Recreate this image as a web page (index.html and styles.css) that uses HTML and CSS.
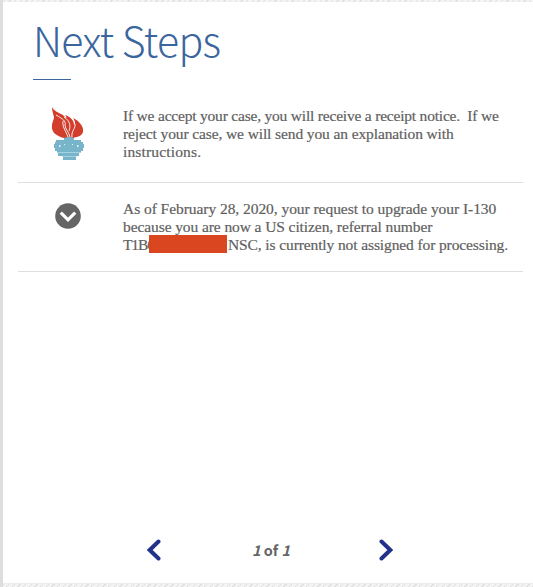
FILE: index.html
```html
<!DOCTYPE html>
<html lang="en">
<head>
    <meta charset="UTF-8">
    <meta name="viewport" content="width=device-width, initial-scale=1.0">
    <title>Next Steps</title>
    <link rel="stylesheet" href="styles.css">
</head>
<body>
    <main class="panel">
        <h1 class="title">Next Steps</h1>

        <div class="steps">
            <div class="step step-notice">
                <svg class="torch" viewBox="0 0 34 54" width="34" height="54">
                    <path fill="#d33d2c" d="M1 0C4 6 11 6 14 10C16 12 16 10 14 8C20 10 23 14 23 18C25 17 24 14 22 11C28 14 33 19 32 25C31 29 26 30 22 31H13C5 29 0 25 1 18C1 15 3 13 3 10C2 7 1 3 1 0Z"/>
                    <path fill="none" stroke="#fff" stroke-width="0.9" d="M5 8C12 12 15 14 14 18C14 22 18 25 19 30M13 10C19 14 20 19 18 24M12 14C11 20 15 24 17 30M24 17C25 21 20 24 21 30"/>
                    <path fill="#78b5cb" d="M13 31Q18 29 23 31V33H13ZM5 33H30V35H32V37H33V41H32V44H30V46H6V44H4V41H3V37H4V35H5ZM7 46H28V49H7ZM12 49H25V53H12Z"/>
                    <path fill="#b9dbe6" d="M6 45H30V45.7H6ZM11 49H26V49.7H11Z"/>
                    <path fill="#e2f2f6" d="M8 38H9.5V40H8ZM13 37H14V38H13ZM21 37H22V38H21ZM26 38H27.5V40H26Z"/>
                </svg>
                <p class="step-text">
                    <span class="line notice-1">If we accept your case, you will receive a receipt notice.&nbsp; If we</span>
                    <span class="line notice-2">reject your case, we will send you an explanation with</span>
                    <span class="line notice-3">instructions.</span>
                </p>
            </div>

            <div class="step step-status">
                <svg class="toggle" viewBox="0 0 26 26" width="26" height="26">
                    <circle cx="13" cy="13" r="12.8" fill="#656565"/>
                    <path fill="none" stroke="#fff" stroke-width="3.2" d="M5.8 9.6L13 16.8L20.2 9.6"/>
                </svg>
                <p class="step-text">
                    <span class="line status-1">As of February 28, 2020, your request to upgrade your I-130</span>
                    <span class="line status-2">because you are now a US citizen, referral number</span>
                    <span class="line status-3"><span class="prefix">T1B6</span><span class="redacted"></span><span class="suffix">NSC, is currently not assigned for processing.</span></span>
                </p>
            </div>
        </div>

        <nav class="pager">
            <svg class="arrow" viewBox="0 0 14 22" width="14" height="22">
                <path d="M11.5 2.5L2.7 11L11.5 19.5"/>
            </svg>
            <span class="pager-count"><em>1</em> of <em>1</em></span>
            <svg class="arrow" viewBox="0 0 14 22" width="14" height="22">
                <path d="M2.5 2.5L11.3 11L2.5 19.5"/>
            </svg>
        </nav>
    </main>
</body>
</html>
```
FILE: styles.css
```css
* {
    box-sizing: border-box;
}

body {
    margin: 0;
    padding: 2px 0 3px 3px;
    height: 587px;
    overflow: hidden;
    background: linear-gradient(to right, #dedede 3px, transparent 3px),
        repeating-linear-gradient(135deg, #f3f3f3 0, #f3f3f3 3px, #dfdfdf 3px, #dfdfdf 4px);
}

.panel {
    display: flex;
    flex-direction: column;
    height: 582px;
    background-color: #fff;
    border-bottom: 1px solid #ececec;
}

.title {
    margin: 0;
    padding: 6px 0 0 30px;
    height: 78px;
    font-family: "Noto Sans CJK JP", "Open Sans", sans-serif;
    font-size: 41px;
    font-weight: 300;
    line-height: 62px;
    letter-spacing: -0.7px;
    color: #3b659d;
    white-space: nowrap;
}

.title::after {
    content: "";
    display: block;
    width: 38px;
    height: 1px;
    margin: 9px 0 0 0;
    background-color: #3b659d;
}

.steps {
    margin: 0 10px 0 15px;
}

.step {
    display: grid;
    grid-template-columns: 105px 1fr;
    align-items: start;
    border-bottom: 1px solid #dedede;
}

.step-notice {
    height: 103px;
    padding-top: 27px;
}

.step-status {
    height: 89px;
    padding-top: 17px;
}

.torch {
    margin: 0 0 0 33px;
}

.toggle {
    margin: 3px 0 0 37px;
}

.step-text {
    margin: 0;
    font-family: Georgia, "Liberation Serif", serif;
    font-size: 15.5px;
    line-height: 18px;
    color: #5f5f5f;
    -webkit-text-stroke: 0.2px #5f5f5f;
}

.line {
    display: block;
    height: 18px;
    white-space: nowrap;
}

.notice-1 {
    letter-spacing: -0.2px;
}

.notice-2 {
    letter-spacing: -0.11px;
}

.notice-3 {
    letter-spacing: 0.15px;
}

.status-1 {
    letter-spacing: -0.05px;
}

.status-2 {
    letter-spacing: -0.09px;
}

.status-3 {
    display: flex;
    letter-spacing: -0.11px;
}

.prefix {
    width: 26px;
    letter-spacing: -1.1px;
}

/* covers the rest of the receipt number */
.redacted {
    width: 78px;
    height: 18px;
    margin: -1px 1px 0 0;
    background-color: #da461f;
}

.pager {
    display: flex;
    align-items: center;
    justify-content: space-between;
    width: 246px;
    height: 22px;
    margin: auto 0 22px 144px;
}

.pager-count {
    margin-left: 2px;
    font-family: "Noto Sans CJK JP", "Open Sans", sans-serif;
    font-size: 14.5px;
    font-weight: 700;
    line-height: 22px;
    color: #656565;
}

.arrow {
    fill: none;
    stroke: #22318c;
    stroke-width: 4;
    stroke-linecap: round;
}
```
